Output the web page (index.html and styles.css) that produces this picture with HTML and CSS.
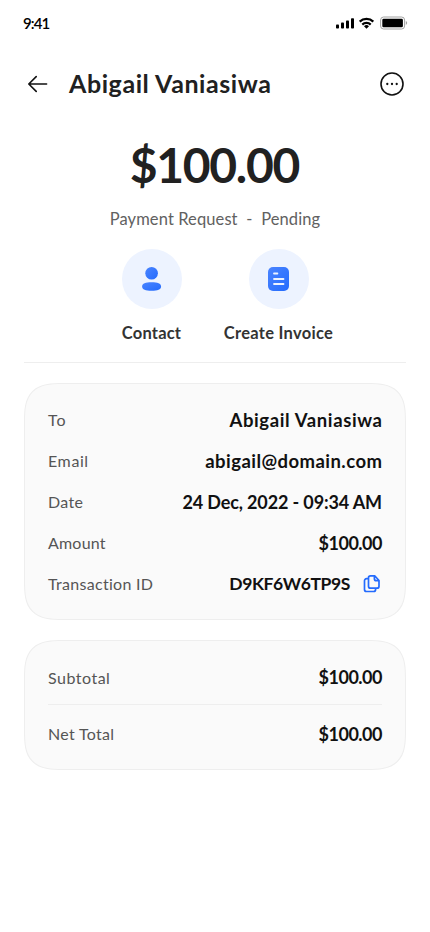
FILE: index.html
```html
<!DOCTYPE html>
<html lang="en">
<head>
<meta charset="utf-8">
<meta name="viewport" content="width=device-width, initial-scale=1">
<title>Payment Request</title>
<link rel="stylesheet" href="styles.css">
</head>
<body>
<main class="screen">
  <div class="status">
    <span class="time">9:41</span>
    <svg class="status-icons" width="72" height="14" viewBox="0 0 72 14">
      <rect x="0" y="8.5" width="3" height="4" rx=".8"/><rect x="5" y="6.5" width="3" height="6" rx=".8"/><rect x="10" y="4.5" width="3" height="8" rx=".8"/><rect x="15" y="2.3" width="3" height="10.2" rx=".8"/>
      <g fill="none" stroke="#000" stroke-width="2.2"><path d="M23.7 5.6a9.8 9.8 0 0 1 13.6 0M26.3 8.6a6 6 0 0 1 8.4 0"/></g>
      <path d="M28 10.2a3.7 3.7 0 0 1 5 0L30.5 12.7z"/>
      <rect x="44.6" y="1" width="24" height="12" rx="3" fill="none" stroke="#a3a3a3"/><rect x="46.3" y="2.7" width="20.6" height="8.6" rx="1.3"/><path d="M69.8 5.1v3.8q1.4-.6 1.4-1.9t-1.4-1.9z" fill="#a3a3a3"/>
    </svg>
  </div>
  <header class="header">
    <svg class="back" width="20" height="18" viewBox="0 0 20 18"><path d="M18.6 9H.8M8.2 1.6L.8 9l7.4 7.4"/></svg>
    <h1 class="title">Abigail Vaniasiwa</h1>
    <svg class="more" width="24" height="24" viewBox="0 0 24 24"><circle class="ring" cx="12" cy="12" r="11"/><circle cx="7.3" cy="12" r="1.15"/><circle cx="12" cy="12" r="1.15"/><circle cx="16.7" cy="12" r="1.15"/></svg>
  </header>
  <section class="summary">
    <div class="total">$100.00</div>
    <div class="state">Payment Request&nbsp; -&nbsp; Pending</div>
    <div class="actions">
      <div class="action">
        <div class="bubble"><svg width="24" height="26" viewBox="0 0 24 26"><defs><linearGradient id="g" x1="1" y1="1" x2="0" y2="0"><stop stop-color="#246bfd"/><stop offset="1" stop-color="#4a84ff"/></linearGradient></defs><circle cx="11.6" cy="7.3" r="6.3" fill="url(#g)"/><path d="M2.1 20.6C2.1 17.4 5.6 16.3 11.6 16.3s9.5 1.1 9.5 4.3-3.5 4.2-9.5 4.2-9.5-1.1-9.5-4.2z" fill="url(#g)"/></svg></div>
        <span class="caption">Contact</span>
      </div>
      <div class="action">
        <div class="bubble"><svg width="22" height="24" viewBox="0 0 22 24"><rect x="0" y="0" width="21" height="24" rx="5" fill="url(#g)"/><path d="M6 6.5h3.4M6 12h9.5M6 17h9.5" stroke="#eef3ff" stroke-width="1.8" stroke-linecap="round"/></svg></div>
        <span class="caption invoice">Create Invoice</span>
      </div>
    </div>
  </section>
  <section class="card details">
    <div class="row"><span class="label to">To</span><span class="value name">Abigail Vaniasiwa</span></div>
    <div class="row"><span class="label email">Email</span><span class="value mail">abigail@domain.com</span></div>
    <div class="row"><span class="label date">Date</span><span class="value when">24 Dec, 2022 - 09:34 AM</span></div>
    <div class="row"><span class="label amount">Amount</span><span class="value money">$100.00</span></div>
    <div class="row"><span class="label transaction">Transaction ID</span><span class="value code">D9KF6W6TP9S</span>
      <svg class="copy" width="18" height="20" viewBox="0 0 18 20"><path d="M12.6 14.2v1.3a2 2 0 0 1-2 2H3.5a2 2 0 0 1-2-2V6.7a2 2 0 0 1 2-2h2M7.5 1.8h4.2l4.3 4.7v5.7a2 2 0 0 1-2 2H7.5a2 2 0 0 1-2-2V3.8a2 2 0 0 1 2-2zM11.4 2v2.7a2 2 0 0 0 2 2H16"/></svg></div>
  </section>
  <section class="card totals">
    <div class="row"><span class="label subtotal">Subtotal</span><span class="value money">$100.00</span></div>
    <div class="row"><span class="label net">Net Total</span><span class="value money">$100.00</span></div>
  </section>
</main>
</body>
</html>
```
FILE: styles.css
```css
* { box-sizing: border-box; }
body { margin: 0; background: #fff; font-family: Lato, "Liberation Sans", sans-serif; font-variant-ligatures: none; color: #212121; }
.screen { width: 430px; height: 932px; overflow: hidden; }
.status { height: 44px; padding: 1px 22px 0 23px; display: flex; align-items: center; justify-content: space-between; color: #000; }
.time { font-size: 15px; font-weight: 600; letter-spacing: -.9px; }
.header { height: 80px; padding: 0 26px 0 28px; display: flex; align-items: center; }
.back { fill: none; stroke: #111; stroke-width: 1.6; stroke-linecap: round; stroke-linejoin: round; }
.title { margin: 0 auto 2px 21px; font-size: 25px; font-weight: 700; line-height: 32px; letter-spacing: .58px; }
.more { fill: #111; }
.ring { fill: none; stroke: #111; stroke-width: 1.6; }
.summary { margin: 0 24px; height: 239px; border-bottom: 1px solid #eee; text-align: center; }
.total { padding-top: 12px; font-size: 48px; line-height: 58px; font-weight: 700; letter-spacing: -1.3px; text-indent: -1.3px; }
.state { padding-top: 14px; font-size: 16.5px; line-height: 22px; color: #616161; letter-spacing: .1px; }
.actions { margin-top: 19px; display: grid; grid-template-columns: 127px 127px; justify-content: center; }
.action { display: flex; flex-direction: column; align-items: center; white-space: nowrap; }
.bubble { width: 60px; height: 60px; border-radius: 50%; background: #edf3ff; display: grid; place-items: center; }
.caption { margin-top: 13px; font-size: 16.5px; line-height: 22px; font-weight: 700; color: #333; letter-spacing: .2px; }
.invoice { letter-spacing: .28px; }
.card { margin: 20px 24px 0; padding: 0 23px; border: 1px solid #eee; border-radius: 30px; background: #fafafa; }
@supports (corner-shape: superellipse(1.6)) {
  .card { border-radius: 40px; corner-shape: superellipse(1.6); }
}
.details { height: 237px; padding-top: 15px; }
.row { height: 41px; display: flex; align-items: center; }
.label { font-size: 16px; color: #555; }
.value { margin-left: auto; font-size: 18px; font-weight: 700; color: #111; }
.to { letter-spacing: .9px; }
.email { letter-spacing: .6px; }
.date { letter-spacing: .3px; }
.amount { letter-spacing: .2px; }
.transaction { letter-spacing: .3px; }
.subtotal { letter-spacing: .5px; }
.net { letter-spacing: .3px; }
.name { font-size: 18.5px; letter-spacing: .62px; margin-right: -.62px; }
.mail { font-size: 18.5px; letter-spacing: .45px; margin-right: -.45px; }
.when { letter-spacing: -.13px; }
.money { letter-spacing: -.5px; }
.code { font-size: 17.5px; letter-spacing: -.4px; }
.copy { margin-left: 13px; margin-right: 1px; fill: none; stroke: #246bfd; stroke-width: 1.7; stroke-linejoin: round; stroke-linecap: round; }
.totals { height: 130px; padding-top: 8px; }
.totals .row { height: 55px; }
.totals .row + .row { height: 58px; border-top: 1px solid #eee; }
.totals .row:first-child { padding-top: 1px; }
```
